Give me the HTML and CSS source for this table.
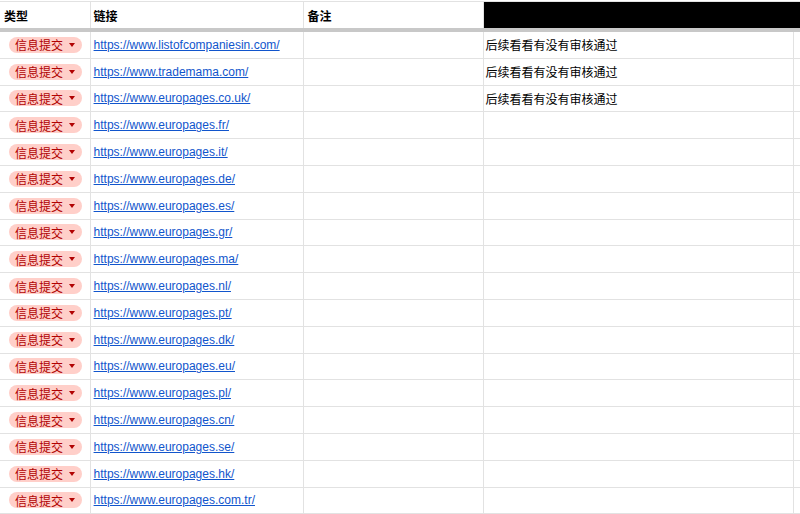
FILE: index.html
```html
<!DOCTYPE html>
<html lang="zh">
<head>
<meta charset="utf-8">
<title>Sheet</title>
<link rel="stylesheet" href="styles.css">
</head>
<body>
<div class="sheet">
  <div class="row head">
    <div class="cell c1">类型</div>
    <div class="cell c2">链接</div>
    <div class="cell c3">备注</div>
    <div class="cell c4 black"></div>
    <div class="cell c5 black"></div>
  </div>
  <div class="row"><div class="cell c1"><span class="chip">信息提交<i class="arrow"></i></span></div><div class="cell c2"><a href="#">https://www.listofcompaniesin.com/</a></div><div class="cell c3"></div><div class="cell c4">后续看看有没有审核通过</div><div class="cell c5"></div></div>
  <div class="row"><div class="cell c1"><span class="chip">信息提交<i class="arrow"></i></span></div><div class="cell c2"><a href="#">https://www.trademama.com/</a></div><div class="cell c3"></div><div class="cell c4">后续看看有没有审核通过</div><div class="cell c5"></div></div>
  <div class="row"><div class="cell c1"><span class="chip">信息提交<i class="arrow"></i></span></div><div class="cell c2"><a href="#">https://www.europages.co.uk/</a></div><div class="cell c3"></div><div class="cell c4">后续看看有没有审核通过</div><div class="cell c5"></div></div>
  <div class="row"><div class="cell c1"><span class="chip">信息提交<i class="arrow"></i></span></div><div class="cell c2"><a href="#">https://www.europages.fr/</a></div><div class="cell c3"></div><div class="cell c4"></div><div class="cell c5"></div></div>
  <div class="row"><div class="cell c1"><span class="chip">信息提交<i class="arrow"></i></span></div><div class="cell c2"><a href="#">https://www.europages.it/</a></div><div class="cell c3"></div><div class="cell c4"></div><div class="cell c5"></div></div>
  <div class="row"><div class="cell c1"><span class="chip">信息提交<i class="arrow"></i></span></div><div class="cell c2"><a href="#">https://www.europages.de/</a></div><div class="cell c3"></div><div class="cell c4"></div><div class="cell c5"></div></div>
  <div class="row"><div class="cell c1"><span class="chip">信息提交<i class="arrow"></i></span></div><div class="cell c2"><a href="#">https://www.europages.es/</a></div><div class="cell c3"></div><div class="cell c4"></div><div class="cell c5"></div></div>
  <div class="row"><div class="cell c1"><span class="chip">信息提交<i class="arrow"></i></span></div><div class="cell c2"><a href="#">https://www.europages.gr/</a></div><div class="cell c3"></div><div class="cell c4"></div><div class="cell c5"></div></div>
  <div class="row"><div class="cell c1"><span class="chip">信息提交<i class="arrow"></i></span></div><div class="cell c2"><a href="#">https://www.europages.ma/</a></div><div class="cell c3"></div><div class="cell c4"></div><div class="cell c5"></div></div>
  <div class="row"><div class="cell c1"><span class="chip">信息提交<i class="arrow"></i></span></div><div class="cell c2"><a href="#">https://www.europages.nl/</a></div><div class="cell c3"></div><div class="cell c4"></div><div class="cell c5"></div></div>
  <div class="row"><div class="cell c1"><span class="chip">信息提交<i class="arrow"></i></span></div><div class="cell c2"><a href="#">https://www.europages.pt/</a></div><div class="cell c3"></div><div class="cell c4"></div><div class="cell c5"></div></div>
  <div class="row"><div class="cell c1"><span class="chip">信息提交<i class="arrow"></i></span></div><div class="cell c2"><a href="#">https://www.europages.dk/</a></div><div class="cell c3"></div><div class="cell c4"></div><div class="cell c5"></div></div>
  <div class="row"><div class="cell c1"><span class="chip">信息提交<i class="arrow"></i></span></div><div class="cell c2"><a href="#">https://www.europages.eu/</a></div><div class="cell c3"></div><div class="cell c4"></div><div class="cell c5"></div></div>
  <div class="row"><div class="cell c1"><span class="chip">信息提交<i class="arrow"></i></span></div><div class="cell c2"><a href="#">https://www.europages.pl/</a></div><div class="cell c3"></div><div class="cell c4"></div><div class="cell c5"></div></div>
  <div class="row"><div class="cell c1"><span class="chip">信息提交<i class="arrow"></i></span></div><div class="cell c2"><a href="#">https://www.europages.cn/</a></div><div class="cell c3"></div><div class="cell c4"></div><div class="cell c5"></div></div>
  <div class="row"><div class="cell c1"><span class="chip">信息提交<i class="arrow"></i></span></div><div class="cell c2"><a href="#">https://www.europages.se/</a></div><div class="cell c3"></div><div class="cell c4"></div><div class="cell c5"></div></div>
  <div class="row"><div class="cell c1"><span class="chip">信息提交<i class="arrow"></i></span></div><div class="cell c2"><a href="#">https://www.europages.hk/</a></div><div class="cell c3"></div><div class="cell c4"></div><div class="cell c5"></div></div>
  <div class="row"><div class="cell c1"><span class="chip">信息提交<i class="arrow"></i></span></div><div class="cell c2"><a href="#">https://www.europages.com.tr/</a></div><div class="cell c3"></div><div class="cell c4"></div><div class="cell c5"></div></div>
</div>
</body>
</html>
```
FILE: styles.css
```css
html, body {
  margin: 0;
  padding: 0;
  background: #ffffff;
  overflow: hidden;
}
body {
  font-family: "Liberation Sans", Arial, "Noto Sans CJK SC", sans-serif;
  font-size: 12px;
  color: #000000;
}
.sheet {
  margin-top: 1px;
  width: 800px;
}
.row {
  display: flex;
  box-sizing: border-box;
  height: 26.8px;
  border-bottom: 1px solid #e2e2e2;
}
.row.head {
  height: 31px;
  border-top: 1px solid #e2e2e2;
  border-bottom: 4px solid #c8c8c8;
  font-weight: bold;
}
.cell {
  box-sizing: border-box;
  display: flex;
  align-items: center;
  padding: 0 3px;
  border-right: 1px solid #e2e2e2;
  white-space: nowrap;
  overflow: hidden;
}
.c1 { width: 91px; padding-left: 4px; }
.c2 { width: 215px; }
.c3 { width: 180px; }
.c4 { width: 312px; padding-left: 2px; }
.c5 { flex: 1; border-right: none; }
.black { background: #000000; border-right-color: #000000; }
.c1 .chip { margin-left: 5px; }
.chip {
  display: inline-flex;
  align-items: center;
  height: 16px;
  padding: 0 7px 0 6px;
  border-radius: 8px;
  background: #ffcfc9;
  color: #b10202;
  font-size: 12px;
}
.arrow {
  display: inline-block;
  width: 0;
  height: 0;
  margin-left: 6px;
  border-left: 3.5px solid transparent;
  border-right: 3.5px solid transparent;
  border-top: 4px solid #b10202;
}
a {
  color: #1155cc;
  text-decoration: underline;
}
```
